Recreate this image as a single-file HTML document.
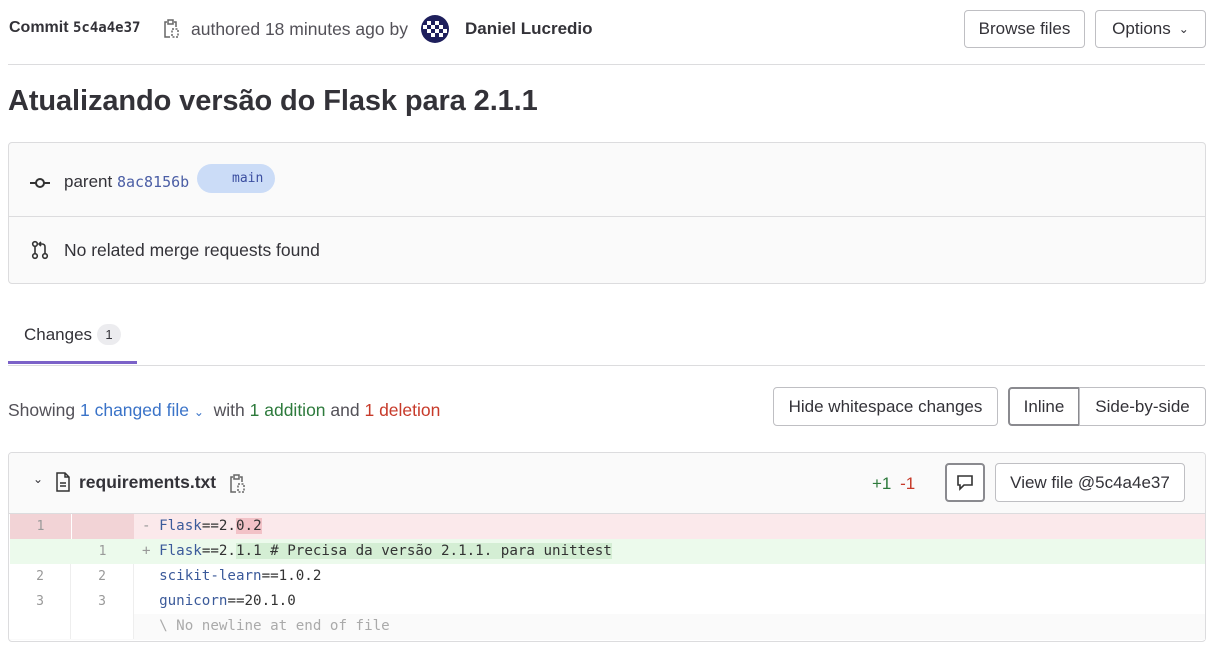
<!DOCTYPE html>
<html><head><meta charset="utf-8"><style>
*{box-sizing:border-box;margin:0;padding:0}
body{width:1213px;height:657px;background:#fff;font-family:"Liberation Sans",sans-serif;color:#333238;position:relative;overflow:hidden;font-size:17px}
.a{position:absolute;white-space:nowrap}
.btn{position:absolute;border:1px solid #bfbfc3;border-radius:4px;background:#fff;font-size:17px;color:#333238;display:flex;align-items:center;justify-content:center}
.mono{font-family:"DejaVu Sans Mono",monospace}
.row{position:absolute;left:10px;width:1195px;height:25px;font-size:14px}
.ln{position:absolute;top:0;height:25px;line-height:25px;text-align:center;color:#999;font-family:"DejaVu Sans Mono",monospace;font-size:13px}
.code{position:absolute;left:132px;top:0;line-height:25px;font-family:"DejaVu Sans Mono",monospace;font-size:14.2px;color:#333}
.k{color:#3b5a9a}
</style></head><body>
<div class="a" style="left:9px;top:19px;font-weight:bold;font-size:16px">Commit <span class="mono" style="font-size:14px">5c4a4e37</span></div>
<svg class="a" style="left:163px;top:19px" width="16" height="20" viewBox="0 0 16 20" fill="none" stroke="#666" stroke-width="1.5"><rect x="5" y="1" width="5" height="4"/><path d="M4 3H2v15h5M11 3h2v5"/><path d="M9 10h6v8H9z" stroke-dasharray="2 1.5"/></svg>
<div class="a" style="left:191px;top:19px;font-size:17.5px;color:#535158">authored 18 minutes ago by</div>
<svg class="a" style="left:421px;top:15px" width="28" height="28" viewBox="0 0 28 28"><circle cx="14" cy="14" r="14" fill="#1e1f5c"/><g fill="#fff"><rect x="6" y="6" width="4" height="4"/><rect x="14" y="6" width="4" height="4"/><rect x="10" y="10" width="4" height="4"/><rect x="18" y="10" width="4" height="4"/><rect x="6" y="14" width="4" height="4"/><rect x="14" y="14" width="4" height="4"/><rect x="10" y="18" width="4" height="4"/><rect x="18" y="18" width="4" height="4"/><rect x="2" y="10" width="4" height="4"/><rect x="22" y="14" width="4" height="4"/></g></svg>
<div class="a" style="left:465px;top:19px;font-weight:bold;font-size:17px;color:#333238">Daniel Lucredio</div>
<div class="btn" style="left:964px;top:10px;width:121px;height:38px">Browse files</div>
<div class="btn" style="left:1095px;top:10px;width:111px;height:38px">Options <span style="font-size:12px;margin-left:8px">&#8964;</span></div>
<div class="a" style="left:8px;top:64px;width:1197px;height:1px;background:#dcdcde"></div>
<div class="a" style="left:8px;top:85px;font-size:29px;font-weight:bold;color:#333238;letter-spacing:-0.1px">Atualizando versão do Flask para 2.1.1</div>
<div class="a" style="left:8px;top:142px;width:1198px;height:142px;border:1px solid #dcdcde;border-radius:4px;background:#fafafa"></div>
<div class="a" style="left:9px;top:216px;width:1196px;height:1px;background:#dcdcde"></div>
<svg class="a" style="left:29px;top:175px" width="22" height="16" viewBox="0 0 22 16"><circle cx="11" cy="8" r="4" fill="none" stroke="#333" stroke-width="2"/><path d="M1 8h6M15 8h6" stroke="#333" stroke-width="2"/></svg>
<div class="a" style="left:64px;top:172px;font-size:17px">parent <span class="mono" style="font-size:15px;color:#4b5ea5">8ac8156b</span></div>
<div class="a mono" style="left:197px;top:164px;width:78px;height:29px;border-radius:15px;background:#cbdcf7;color:#3b4ea0;font-size:13px;line-height:29px;padding-left:35px">main</div>
<svg class="a" style="left:30px;top:240px" width="20" height="20" viewBox="0 0 20 20" fill="none" stroke="#333" stroke-width="1.6"><circle cx="5" cy="4" r="2.3"/><circle cx="5" cy="16" r="2.3"/><circle cx="15" cy="16" r="2.3"/><path d="M5 6.5v7M15 13.5V7q0-3-3-3H9M11 2 9 4l2 2"/></svg>
<div class="a" style="left:64px;top:240px;font-size:17.5px">No related merge requests found</div>
<div class="a" style="left:24px;top:325px;font-size:17px">Changes</div>
<div class="a" style="left:97px;top:324px;width:24px;height:21px;border-radius:11px;background:#ececef;font-size:13px;text-align:center;line-height:21px">1</div>
<div class="a" style="left:8px;top:361px;width:129px;height:3px;background:#7b62c8"></div>
<div class="a" style="left:8px;top:365px;width:1197px;height:1px;background:#dcdcde"></div>
<div class="a" style="left:8px;top:400px;font-size:17.5px;color:#535158">Showing <span style="color:#3a73c8">1 changed file</span> <span style="color:#3a73c8;font-size:12px">&#8964;</span> &nbsp;with <span style="color:#2d7a3c">1 addition</span> and <span style="color:#c73a2a">1 deletion</span></div>
<div class="btn" style="left:773px;top:387px;width:225px;height:39px">Hide whitespace changes</div>
<div class="btn" style="left:1008px;top:387px;width:72px;height:39px;border:2px solid #8a8a8f;border-radius:4px 0 0 4px">Inline</div>
<div class="btn" style="left:1079px;top:387px;width:127px;height:39px;border-radius:0 4px 4px 0">Side-by-side</div>
<div class="a" style="left:8px;top:452px;width:1198px;height:190px;border:1px solid #dcdcde;border-radius:4px;background:#fff;overflow:hidden">
<div style="position:absolute;left:0;top:0;width:100%;height:61px;background:#fafafa;border-bottom:1px solid #dcdcde"></div>
</div>
<div class="a" style="left:33px;top:472px;font-size:12px">&#8964;</div>
<svg class="a" style="left:55px;top:472px" width="16" height="20" viewBox="0 0 16 20" fill="none" stroke="#333" stroke-width="1.5"><path d="M2 1h8l4 4v14H2z M10 1v4h4M5 11h6M5 14h6"/></svg>
<div class="a" style="left:79px;top:472px;font-weight:bold;font-size:17.5px">requirements.txt</div>
<svg class="a" style="left:229px;top:474px" width="16" height="20" viewBox="0 0 16 20" fill="none" stroke="#666" stroke-width="1.5"><rect x="5" y="1" width="5" height="4"/><path d="M4 3H2v15h5M11 3h2v5"/><path d="M9 10h6v8H9z" stroke-dasharray="2 1.5"/></svg>
<div class="a" style="left:872px;top:474px;font-size:17px;color:#2d7a3c">+1 <span style="color:#c73a2a;margin-left:4px">-1</span></div>
<div class="btn" style="left:945px;top:463px;width:40px;height:39px;border:2px solid #8a8a8f"><svg width="20" height="18" viewBox="0 0 20 18" fill="none" stroke="#333" stroke-width="1.6"><path d="M3 2h14v9H9l-4 4v-4H3z"/></svg></div>
<div class="btn" style="left:995px;top:463px;width:190px;height:39px">View file @5c4a4e37</div>
<div class="row" style="top:514px;background:#fbe9eb"><div class="ln" style="left:0;width:61px;background:#f2d3d6">1</div><div class="ln" style="left:61px;width:63px;background:#f2d3d6;border-left:1px solid #fff"></div><div class="code"><span style="color:#999">-</span> <span class="k">Flask</span>==2.<span style="background:#f2c2c7">0.2</span></div></div>
<div class="row" style="top:539px;background:#ecfaec"><div class="ln" style="left:0;width:61px"></div><div class="ln" style="left:61px;width:63px">1</div><div class="code"><span style="color:#999">+</span> <span class="k">Flask</span>==2.<span style="background:#d4eed4">1.1 # Precisa da versão 2.1.1. para unittest</span></div></div>
<div class="row" style="top:564px"><div class="ln" style="left:0;width:61px;border-right:1px solid #eee">2</div><div class="ln" style="left:61px;width:63px;border-right:1px solid #eee">2</div><div class="code">&nbsp; <span class="k">scikit-learn</span>==1.0.2</div></div>
<div class="row" style="top:589px"><div class="ln" style="left:0;width:61px;border-right:1px solid #eee">3</div><div class="ln" style="left:61px;width:63px;border-right:1px solid #eee">3</div><div class="code">&nbsp; <span class="k">gunicorn</span>==20.1.0</div></div>
<div class="row" style="top:614px;height:26px;background:#fafafa"><div class="ln" style="left:0;width:61px;border-right:1px solid #eee;background:#fff"></div><div class="ln" style="left:61px;width:63px;border-right:1px solid #eee;background:#fff"></div><div class="code" style="color:#aaa">&nbsp; \ No newline at end of file</div></div>
</body></html>
